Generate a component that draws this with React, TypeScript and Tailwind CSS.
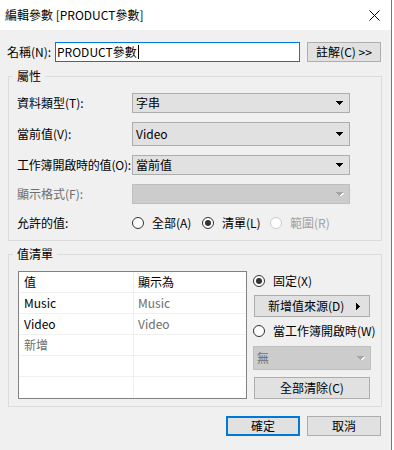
import clsx from "clsx";

function Arrow({ disabled }: { disabled?: boolean }) {
  return (
    <svg width="8" height="5" viewBox="0 0 8 5" shapeRendering="crispEdges" className="shrink-0">
      {disabled && <polygon points="2,1 8,1 5,5" fill="#ffffff" />}
      <polygon points="0,0 7,0 3.5,4" fill={disabled ? "#a6a6a6" : "#000000"} />
    </svg>
  );
}

function Combo({ value, disabled, className }: { value?: string; disabled?: boolean; className?: string }) {
  return (
    <div
      className={clsx(
        "flex shrink-0 items-center justify-between border pl-[3px] pr-[5px]",
        disabled ? "border-[#bfbfbf] bg-[#cccccc] text-[#6d6d6d]" : "border-[#adadad] bg-[#e1e1e1]",
        className
      )}
    >
      <span>{value}</span>
      <Arrow disabled={disabled} />
    </div>
  );
}

function Radio({ checked, disabled }: { checked?: boolean; disabled?: boolean }) {
  return (
    <span
      className={clsx(
        "flex h-[12px] w-[12px] shrink-0 items-center justify-center rounded-full border bg-white",
        disabled ? "border-[#cccccc]" : "border-[#333333]"
      )}
    >
      {checked && <span className="h-[6px] w-[6px] rounded-full bg-[#333333]" />}
    </span>
  );
}

function RadioItem({ label, checked, disabled, className }: { label: string; checked?: boolean; disabled?: boolean; className?: string }) {
  return (
    <div className={clsx("flex shrink-0 items-center gap-[8px] whitespace-nowrap", className)}>
      <Radio checked={checked} disabled={disabled} />
      <span className={disabled ? "text-[#a0a0a0]" : ""}>{label}</span>
    </div>
  );
}

const rows = [
  { value: "值", shown: "顯示為", head: true },
  { value: "Music", shown: "Music" },
  { value: "Video", shown: "Video" },
  { value: "新增", shown: "", muted: true },
  { value: "", shown: "" },
  { value: "", shown: "" },
];

export default function App() {
  return (
    <div className="h-[450px] w-[394px] bg-white pr-[2px] font-['Noto_Sans_CJK_TC',sans-serif] text-[12px] leading-[16px] text-black">
      <div className="flex h-full w-[392px] flex-col border-r border-[#767676] bg-[#f0f0f0]">
        {/* title bar */}
        <div className="flex h-[30px] items-center justify-between bg-white pl-[5px] pr-[11px]">
          <span>編輯參數 [PRODUCT參數]</span>
          <svg width="11" height="11" viewBox="0 0 11 11">
            <path d="M0.5 0.5 L10.5 10.5 M10.5 0.5 L0.5 10.5" stroke="#000" strokeWidth="1" />
          </svg>
        </div>

        <div className="flex flex-col pl-[7px]">
          {/* name row */}
          <div className="mt-[12px] flex h-[20px] items-center whitespace-nowrap">
            <span className="w-[48px] shrink-0">名稱(N):</span>
            <div className="flex h-[20px] w-[245px] shrink-0 items-center border border-[#0078d7] bg-white pl-[1px]">
              <span>PRODUCT參數</span>
              <span className="ml-px h-[14px] w-px bg-black" />
            </div>
            <button className="ml-[7px] flex h-[20px] w-[74px] shrink-0 items-center justify-center border border-[#adadad] bg-[#e1e1e1]">
              註解(C) &gt;&gt;
            </button>
          </div>

          {/* properties group */}
          <fieldset className="ml-px mt-[6px] w-[374px] border border-[#dcdcdc] pb-[7px] pl-[8px]">
            <legend className="-ml-[4px] px-[4px]">屬性</legend>
            <div className="mt-[9px] flex h-[20px] items-center whitespace-nowrap">
              <span className="w-[115px] shrink-0">資料類型(T):</span>
              <Combo value="字串" className="h-[20px] w-[218px]" />
            </div>
            <div className="mt-[9px] flex h-[24px] items-center whitespace-nowrap">
              <span className="w-[115px] shrink-0">當前值(V):</span>
              <Combo value="Video" className="h-[24px] w-[218px]" />
            </div>
            <div className="mt-[9px] flex h-[20px] items-center whitespace-nowrap">
              <span className="w-[115px] shrink-0 tracking-[-0.2px]">工作簿開啟時的值(O):</span>
              <Combo value="當前值" className="h-[20px] w-[218px]" />
            </div>
            <div className="mt-[9px] flex h-[20px] items-center whitespace-nowrap">
              <span className="w-[115px] shrink-0 text-[#6d6d6d]">顯示格式(F):</span>
              <Combo disabled className="h-[20px] w-[218px]" />
            </div>
            <div className="mt-[9px] flex h-[20px] items-center whitespace-nowrap">
              <span className="w-[115px] shrink-0">允許的值:</span>
              <RadioItem label="全部(A)" className="w-[70px]" />
              <RadioItem label="清單(L)" checked className="w-[68px]" />
              <RadioItem label="範圍(R)" disabled />
            </div>
          </fieldset>

          {/* value list group */}
          <fieldset className="ml-px mt-[5px] w-[374px] border border-[#dcdcdc] pb-[7px] pl-[9px]">
            <legend className="-ml-[5px] px-[4px]">值清單</legend>
            <div className="mt-[9px] flex">
              <div className="flex h-[128px] w-[229px] shrink-0 flex-col border border-[#828282] bg-white">
                {rows.map((r, i) => (
                  <div key={i} className="flex h-[21px] border-b border-[#f0f0f0] last:border-b-0">
                    <div className={clsx("flex w-[115px] items-center border-r border-[#f0f0f0] pl-[5px]", r.muted && "text-[#6d6d6d]")}>
                      {r.value}
                    </div>
                    <div className={clsx("flex flex-1 items-center pl-[4px]", !r.head && "text-[#6d6d6d]")}>{r.shown}</div>
                  </div>
                ))}
              </div>

              <div className="ml-[6px] flex w-[118px] shrink-0 flex-col">
                <RadioItem label="固定(X)" checked className="h-[20px]" />
                <button className="ml-px mt-[4px] flex h-[22px] w-[116px] items-center whitespace-nowrap border border-[#adadad] bg-[#e1e1e1] pl-[13px] pr-[9px]">
                  <span className="flex-1 text-left">新增值來源(D)</span>
                  <svg width="4" height="7" viewBox="0 0 4 7" shapeRendering="crispEdges">
                    <polygon points="0,0 4,3.5 0,7" fill="#000" />
                  </svg>
                </button>
                <RadioItem label="當工作簿開啟時(W)" className="mt-[4px] h-[20px]" />
                <Combo value="無" disabled className="mt-[5px] h-[24px] w-[118px]" />
                <button className="ml-px mt-[7px] flex h-[22px] w-[116px] items-center justify-center border border-[#adadad] bg-[#e1e1e1]">
                  全部清除(C)
                </button>
              </div>
            </div>
          </fieldset>

          {/* footer */}
          <div className="mt-[9px] flex w-[374px] justify-end gap-[7px]">
            <button className="flex h-[20px] w-[74px] items-center justify-center border-2 border-[#0078d7] bg-[#e1e1e1]">確定</button>
            <button className="flex h-[20px] w-[74px] items-center justify-center border border-[#adadad] bg-[#e1e1e1]">取消</button>
          </div>
        </div>
      </div>
    </div>
  );
}
